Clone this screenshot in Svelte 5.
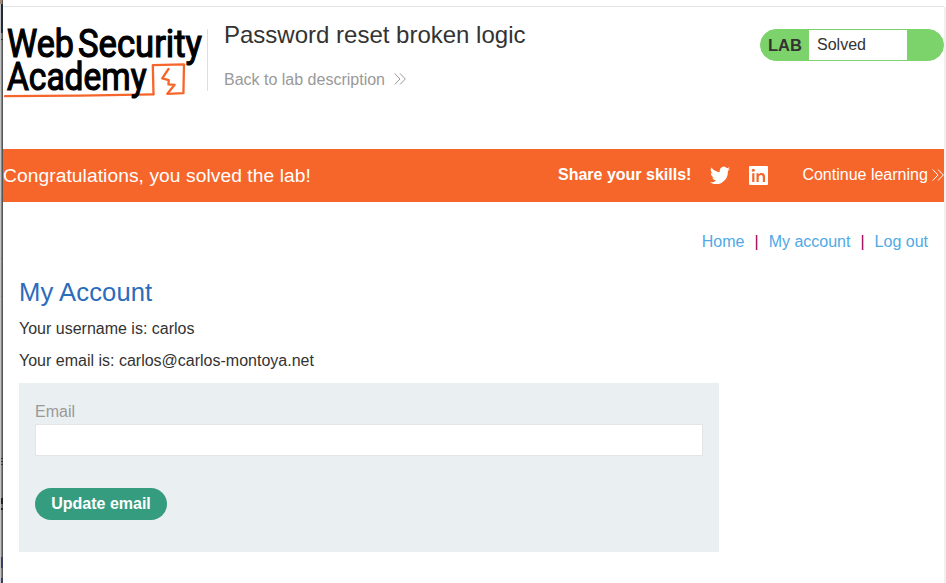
<script>
  const nav = ['Home', 'My account', 'Log out'];
  let email = $state('');
</script>

{#snippet chevrons()}
  <svg class="chevrons" width="12" height="12" viewBox="0 0 12 12" fill="none" stroke="currentColor" stroke-width="1">
    <path d="M.7.5 6 6 .7 11.5M6 .5 11.3 6 6 11.5" />
  </svg>
{/snippet}

<div class="screen">
  <div class="edge" aria-hidden="true">
    <svg width="3" height="583" shape-rendering="crispEdges">
      <path fill="#c4c4c4" d="M0 0h1v583H0z" />
      <path fill="#858585" d="M1 0h1v583H1z" />
      <path fill="#555657" d="M2 0h1v583H2z" />
      <path fill="#a08871" d="M0 0h2v4H0z" />
      <path fill="#202b3d" d="M1 4h2v29H1z" />
      <path fill="#303335" d="M1 39h2v1H1zM1 458h2v1H1zM1 461h2v1H1zM1 464h2v1H1z" />
      <path fill="#202224" d="M1 498h2v6H1zM1 508h2v2H1z" />
      <path fill="#3b3d65" d="M1 557h2v11H1zM1 578h2v5H1z" />
      <path fill="#6d6e70" d="M1 198h1v1H1zM1 258h1v1H1zM1 296h1v1H1z" />
    </svg>
  </div>
  <div class="page">
    <header>
      <svg class="logo" width="204" height="76" viewBox="3 25 204 76" role="img" aria-label="Web Security Academy">
        <g fill="#000" stroke="#000" stroke-width="1.2">
          <text x="7" y="57.3" textLength="67" lengthAdjust="spacingAndGlyphs">Web</text>
          <text x="78" y="57.3" textLength="124" lengthAdjust="spacingAndGlyphs">Security</text>
        </g>
        <g fill="none" stroke="#f6662b" stroke-linejoin="round" stroke-linecap="round">
          <path stroke-width="2.3" d="M153.5 94.3 152.8 65.200l31.200-.9-.6 28.900-16 .7" />
          <path stroke-width="2.3" d="M5 96.200 80 95.600 153.500 94.300" />
          <path stroke-width="2.3" d="m168.500 69-6.300 9.400 6.600 1.700-.4 4.200 6.200.5-7 8.600" />
        </g>
        <g fill="#000" stroke="#000" stroke-width="1.2">
          <text x="7" y="90" textLength="139.500" lengthAdjust="spacingAndGlyphs">Academy</text>
        </g>
      </svg>
      <div class="heading">
        <h2>Password reset broken logic</h2>
        <a href="#lab">Back to lab description {@render chevrons()}</a>
      </div>
      <div class="status"><b>LAB</b><span>Solved</span></div>
    </header>

    <section class="banner">
      <h4>Congratulations, you solved the lab!</h4>
      <b>Share your skills!</b>
      <svg class="twitter" width="20" height="18" viewBox="0 1.5 24 20" preserveAspectRatio="none" fill="#fff">
        <path d="M24 4.6a10 10 0 0 1-2.8.8 5 5 0 0 0 2.2-2.7 10 10 0 0 1-3.2 1.2 4.9 4.9 0 0 0-8.4 4.5A14 14 0 0 1 1.7 3.2 4.9 4.9 0 0 0 3.2 9.700a5 5 0 0 1-2.200-.6v.1a4.900 4.900 0 0 0 3.900 4.800 5 5 0 0 1-2.200.1 4.900 4.900 0 0 0 4.600 3.400A9.900 9.900 0 0 1 0 19.500 14 14 0 0 0 21.500 7.100 10 10 0 0 0 24 4.600z" />
      </svg>
      <svg class="linkedin" width="19" height="19" viewBox="0 0 19 19">
        <rect width="19" height="19" rx="1" fill="#fff" />
        <g fill="#f6662b">
          <circle cx="4.300" cy="4.300" r="1.500" />
          <path d="M3.200 7.200h2.200V16H3.200zM7.500 7.200h2.200v1.200C10.500 7.400 11.500 7 12.700 7c2.500 0 3.300 1.600 3.300 4v5h-2.200v-4.500c0-1.500-.5-2.500-1.700-2.500-1.600 0-2.400 1-2.400 2.600V16H7.500z" />
        </g>
      </svg>
      <a href="#next">Continue learning {@render chevrons()}</a>
    </section>

    <main>
      <nav>
        {#each nav as item, i}
          {#if i}<span>|</span>{/if}
          <a href="#{i}">{item}</a>
        {/each}
      </nav>
      <h1>My Account</h1>
      <p>Your username is: carlos</p>
      <p>Your email is: carlos@carlos-montoya.net</p>
      <form onsubmit={(e) => e.preventDefault()}>
        <label for="email">Email</label>
        <input id="email" type="email" bind:value={email} />
        <button>Update email</button>
      </form>
    </main>
  </div>
  <div class="scroll"></div>
</div>

<style>
  :global(body) { margin: 0; background: #fff; overflow: hidden; }
  .screen {
    display: flex; width: 946px; height: 583px; overflow: hidden;
    font: 16px/20px "Liberation Sans", Arial, sans-serif; color: #333332;
  }
  .edge { width: 3px; flex: none; }
  .edge svg { display: block; }
  .page { width: 941px; flex: none; margin-top: 6px; border-top: 1px solid #e3e3e3; box-sizing: border-box; }
  .scroll { width: 2px; margin-top: 7px; background: #f0f0f0; }
  h1, h2, h4, p { margin: 0; font-weight: 400; }
  a { color: inherit; text-decoration: none; white-space: nowrap; }

  header { display: flex; align-items: flex-start; height: 142px; box-sizing: border-box; padding-top: 18px; }
  .logo { flex: none; font: 400 38px Roboto, sans-serif; overflow: visible; }
  .heading { height: 62px; margin-top: 4px; border-left: 1px solid #dedede; padding-left: 16px; box-sizing: border-box; }
  h2 { font-size: 24px; line-height: 30px; margin-top: -9px; white-space: nowrap; }
  .heading a { display: block; margin-top: 20px; color: #999; }
  .heading .chevrons { margin-left: 5px; }
  .status {
    display: flex; box-sizing: border-box; width: 184px; height: 32px; margin: 4px 0 0 auto;
    border: 1px solid #7dd36b; border-radius: 16px; background: #7dd36b; line-height: 30px;
  }
  .status b { width: 48px; box-sizing: border-box; padding-left: 7px; padding-top: 1px; font-size: 16.500px; line-height: 29px; }
  .status span { width: 98px; box-sizing: border-box; padding-left: 8px; background: #fff; }

  .banner { display: flex; align-items: center; height: 53px; background: #f6662b; color: #fff; overflow: hidden; white-space: nowrap; }
  h4 { width: 555px; flex: none; font-size: 19.200px; letter-spacing: .08px; }
  .banner b, .banner a { margin-bottom: 2px; }
  .banner svg { flex: none; }
  .twitter { margin-left: 18.500px; margin-bottom: 1px; }
  .linkedin { margin-left: 19.500px; }
  .banner a { margin-left: 34px; }
  .banner .chevrons { margin-left: 0; margin-bottom: -1px; }

  main { padding: 30px 16px 0; }
  nav { display: flex; justify-content: flex-end; color: #4fa9e6; }
  nav span { margin: 0 10px; color: #930050; }
  h1 { margin-top: 25px; color: #2b6cbb; font-size: 25.600px; letter-spacing: .1px; line-height: 30px; }
  p { margin-top: 12px; }
  form { width: 700px; height: 169px; box-sizing: border-box; margin-top: 12px; padding: 19px 16px; background: #eaeff2; }
  label { display: block; color: #999; }
  input { display: block; width: 668px; height: 32px; box-sizing: border-box; margin-top: 2px; padding: 0 8px; border: 1px solid #e4e4e4; background: #fff; font: inherit; outline: 0; }
  button { display: block; width: 132px; height: 32px; margin-top: 32px; padding: 0; border: 0; border-radius: 16px; background: #369c7f; color: #fff; font: bold 16px/32px "Liberation Sans", Arial, sans-serif; }
</style>
